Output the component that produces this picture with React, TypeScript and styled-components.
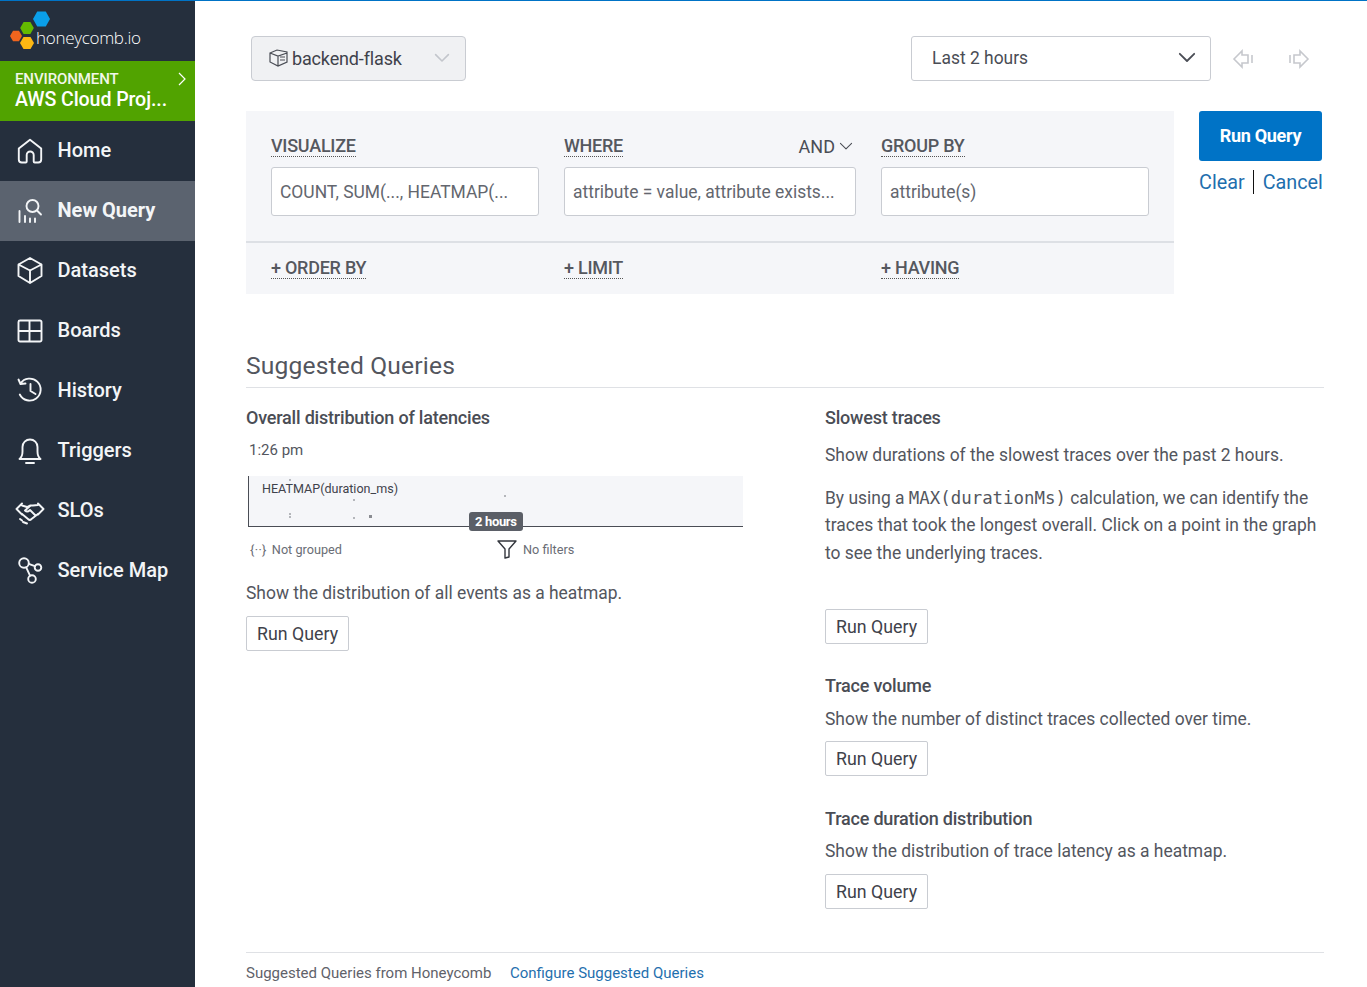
import React from 'react'
import styled, { createGlobalStyle } from 'styled-components'

const Global = createGlobalStyle`
  html, body { margin: 0; padding: 0; background: #fff; }
  body { font-family: Roboto, "Liberation Sans", sans-serif; color: #3a3d45; }
  * { box-sizing: border-box; }
`

const Page = styled.div`
  display: flex;
  width: 1367px;
  height: 987px;
  overflow: hidden;
  border-top: 1px solid #0073c6;
`
const Sidebar = styled.nav`
  width: 195px;
  flex: none;
  background: #252f3d;
  display: flex;
  flex-direction: column;
`
const LogoRow = styled.div`
  height: 60px;
  padding: 9px 0 0 9px;
  display: flex;
`
const LogoText = styled.span`
  font-family: "Open Sans", sans-serif;
  font-size: 17px;
  font-weight: 300;
  letter-spacing: -0.3px;
  color: #fff;
  margin: 17px 0 0 -17px;
  line-height: 22px;
`
const EnvBlock = styled.div`
  height: 60px;
  background: #51a300;
  color: #fff;
  padding: 9px 8px 0 15px;
  position: relative;
`
const EnvLabel = styled.div`
  font-size: 15px;
  line-height: 18px;
  font-weight: 500;
  letter-spacing: -0.1px;
  color: #f2f7e9;
`
const EnvName = styled.div`
  font-size: 19.6px;
  line-height: 24px;
  font-weight: 500;
  letter-spacing: -0.1px;
`
const EnvArrow = styled.svg`
  position: absolute;
  right: 8px;
  top: 11px;
`
const NavItem = styled.div<{ $active?: boolean }>`
  height: 60px;
  display: flex;
  align-items: center;
  padding: 0 0 2px 15px;
  background: ${p => (p.$active ? '#5b636f' : 'transparent')};
  color: #f3f5f7;
  font-size: 20px;
  font-weight: ${p => (p.$active ? 700 : 500)};
`
const NavIcon = styled.svg`
  width: 30px;
  height: 30px;
  flex: none;
  margin-right: 12.5px;
  fill: none;
  stroke: #f3f5f7;
  stroke-width: 1.9;
  stroke-linecap: round;
  stroke-linejoin: round;
`
const Main = styled.main`
  flex: 1;
  min-width: 0;
  padding: 35px 43px 0 56px;
`
const TopBar = styled.div`
  display: flex;
  align-items: center;
  height: 45px;
  margin-bottom: 30px;
`
const DatasetSelect = styled.div`
  width: 215px;
  height: 45px;
  background: #f0f1f3;
  border: 1px solid #c9ccd2;
  border-radius: 4px;
  display: flex;
  align-items: center;
  padding: 0 15px 1px 16px;
  font-size: 18px;
  color: #3f424b;
  letter-spacing: -0.15px;
`
const TimeSelect = styled.div`
  width: 300px;
  height: 45px;
  margin-left: auto;
  border: 1px solid #c9ccd2;
  border-radius: 3px;
  display: flex;
  align-items: center;
  padding: 0 14px 2px 20px;
  font-size: 17.45px;
  color: #4a4d55;
  justify-content: space-between;
`
const HistoryButtons = styled.div`
  display: flex;
  align-items: center;
  gap: 34px;
  margin: 0 14px 0 21px;
`
const QueryRow = styled.div`
  display: flex;
  margin-left: -5px;
  justify-content: space-between;
`
const Builder = styled.div`
  width: 928px;
  height: 183px;
  background: #f5f6f9;
`
const BuilderTop = styled.div`
  height: 132px;
  padding: 22px 25px 0;
  display: grid;
  grid-template-columns: 268px 292px 268px;
  column-gap: 25px;
  border-bottom: 2px solid #dde0e5;
`
const BuilderBottom = styled.div`
  padding: 15px 25px 0;
  display: grid;
  grid-template-columns: 268px 292px 268px;
  column-gap: 25px;
`
const ClauseHead = styled.div`
  display: flex;
  justify-content: space-between;
  align-items: center;
  height: 26px;
  margin-bottom: 8px;
`
const Clause = styled.span`
  font-size: 18px;
  line-height: 20px;
  color: #55585f;
  font-weight: 500;
  letter-spacing: -0.25px;
  border-bottom: 1px dotted #555;
  justify-self: start;
`
const AndLabel = styled.span`
  font-size: 18px;
  color: #4a4d55;
  display: flex;
  align-items: center;
  gap: 4px;
  margin-right: 3px;
`
const ClauseInput = styled.div`
  height: 49px;
  background: #fff;
  border: 1px solid #c9ccd2;
  border-radius: 3px;
  padding: 0 8px;
  display: flex;
  align-items: center;
  font-size: 17.45px;
  color: #63666e;
  white-space: nowrap;
  overflow: hidden;
`
const RunColumn = styled.div`
  width: 124px;
  margin-right: 1px;
`
const RunButton = styled.div`
  width: 123px;
  height: 50px;
  padding-bottom: 2px;
  background: #0073c6;
  border-radius: 3px;
  color: #fff;
  font-size: 18px;
  font-weight: 700;
  letter-spacing: -0.3px;
  display: flex;
  align-items: center;
  justify-content: center;
`
const RunLinks = styled.div`
  display: flex;
  align-items: center;
  margin-top: 9px;
  font-size: 19.8px;
  color: #1f6fae;
  height: 24px;
  white-space: nowrap;
`
const LinkDivider = styled.span`
  flex: none;
  width: 1px;
  height: 24px;
  background: #111;
  margin: 0 8.5px;
`
const SuggestHeading = styled.h2`
  margin: 54px 0 0 -5px;
  font-size: 24.6px;
  line-height: 36px;
  font-weight: 400;
  color: #53565e;
  letter-spacing: 0.17px;
  padding-bottom: 3px;
  border-bottom: 1px solid #dfe1e5;
`
const Columns = styled.div`
  display: grid;
  grid-template-columns: 579px 1fr;
  margin-left: -5px;
  height: 564px;
`
const Column = styled.div`
  display: flex;
  flex-direction: column;
  align-items: flex-start;
`
const Title = styled.div<{ $gap?: number }>`
  font-size: 18px;
  line-height: 22px;
  font-weight: 500;
  color: #4a4d55;
  letter-spacing: -0.2px;
  margin-top: ${p => p.$gap ?? 0}px;
`
const Copy = styled.p<{ $top?: number }>`
  margin: ${p => p.$top ?? 0}px 0 0;
  font-size: 17.47px;
  line-height: 27.5px;
  color: #53565e;
`
const Code = styled.code`
  font-family: "DejaVu Sans Mono", monospace;
  font-size: 17.4px;
  color: #53565e;
`
const SmallButton = styled.div<{ $top?: number }>`
  height: 35px;
  padding: 0 10px;
  border: 1px solid #c9ccd2;
  border-radius: 2px;
  margin-top: ${p => p.$top ?? 0}px;
  display: flex;
  align-items: center;
  font-size: 17.8px;
  color: #3f424b;
  background: #fff;
`
const Preview = styled.div`
  width: 495px;
  margin: 11px 0 0 2px;
`
const PreviewTime = styled.div`
  font-size: 15px;
  line-height: 20px;
  color: #53565e;
  margin-left: 1px;
  margin-bottom: 16px;
`
const Chart = styled.div`
  height: 51px;
  background: #f5f6f9;
  border-left: 1px solid #4a4d55;
  border-bottom: 1px solid #4a4d55;
  padding: 5px 0 0 13px;
  font-size: 12.55px;
  line-height: 16px;
  color: #3f424b;
  position: relative;
`
const Dot = styled.i<{ $x: number; $y: number; $dark?: boolean }>`
  position: absolute;
  left: ${p => p.$x}px;
  top: ${p => p.$y}px;
  width: ${p => (p.$dark ? 3 : 2)}px;
  height: ${p => (p.$dark ? 3 : 2)}px;
  background: ${p => (p.$dark ? '#8a8c92' : '#b4b6bb')};
`
const RangeBadge = styled.span`
  position: absolute;
  left: 220px;
  top: 36px;
  height: 19px;
  padding: 0 6px;
  border-radius: 3px;
  background: #5b5f67;
  color: #fff;
  font-size: 13px;
  font-weight: 700;
  line-height: 19px;
  letter-spacing: -0.35px;
`
const PreviewMeta = styled.div`
  display: grid;
  grid-template-columns: 247px 1fr;
  font-size: 12.7px;
  color: #6a6d75;
  height: 22px;
  margin: 11px 0 0 2px;
`
const MetaItem = styled.span`
  display: flex;
  align-items: center;
  gap: 6px;
`
const Braces = styled.span`
  letter-spacing: 0.4px;
  margin-right: -1px;
`
const Footer = styled.div`
  margin-left: -5px;
  border-top: 1px solid #dfe1e5;
  padding-top: 10px;
  display: flex;
  gap: 18.5px;
  font-size: 15px;
  line-height: 20px;
  color: #5f626a;
`
const FooterLink = styled.span`
  color: #1f6fae;
`
const CaretSlot = styled.span`
  margin-left: auto;
  display: flex;
`
const DatasetIcon = styled.svg`
  flex: none;
  margin-right: 3px;
`

const icons: Record<string, React.ReactNode> = {
  home: <path d="M3.800 13.500 15 4.800l11.200 8.700v11a3 3 0 0 1-3 3h-3.500a1 1 0 0 1-1-1v-6.500a3.500 3.500 0 0 0-7 0v6.500a1 1 0 0 1-1 1H6.800a3 3 0 0 1-3-3z" />,
  query: (
    <>
      <circle cx="17.500" cy="11" r="6" />
      <path d="m22 15.500 4 4M4.500 16v11M10 21v6M15 23.500V27M20 23.500V27" />
    </>
  ),
  datasets: <path d="M15 3 26.500 9.500v11.500L15 28 3.500 21V9.500zM3.500 9.500 15 15.500l11.500-6M15 15.500V28" />,
  boards: <path d="M3.500 7a1.500 1.500 0 0 1 1.500-1.500h20a1.500 1.500 0 0 1 1.500 1.500v18a1.500 1.500 0 0 1-1.500 1.500H5A1.500 1.500 0 0 1 3.500 25zM3.500 16h23M14.500 5.500V26.500" />,
  history: <path d="M5.500 8.500A11 11 0 1 1 4.800 19.500M3.500 4.500l2 4.500 5-.5M15.500 9v7l5 3" />,
  triggers: <path d="M4.500 24h21c-2-1.500-3-4-3-7.500V12a7.500 7.500 0 0 0-15 0v4.500c0 3.500-1 6-3 7.500zM11 28h8" />,
  slos: (
    <g transform="translate(0 2)">
      <path d="M7 6.500 1.500 12 7 17.500M23 6.500 28.500 12 23 17.500M7 8.500l5 1.500 3-1.500h3l5-.5" />
      <path d="M15 9l-5 4.500c1.500 1.500 3.500 1 5-.5l5.500 5.500M7 17l6 5c1 1 2.500 1 3.500 0l6.500-5M8 25l4 1.500M5 22l2 1.500" />
    </g>
  ),
  map: (
    <>
      <circle cx="9" cy="8" r="4.800" />
      <circle cx="23" cy="12.500" r="3.300" />
      <circle cx="17" cy="24" r="3.800" />
      <path d="m11.200 12.300 3.800 8.300M13.800 8.800l6 2.400" />
    </>
  ),
}

const navItems = [
  ['home', 'Home'],
  ['query', 'New Query'],
  ['datasets', 'Datasets'],
  ['boards', 'Boards'],
  ['history', 'History'],
  ['triggers', 'Triggers'],
  ['slos', 'SLOs'],
  ['map', 'Service Map'],
]

const dots: [number, number, boolean?][] = [
  [40, 3], [104, 23], [255, 19], [40, 37], [40, 40], [104, 41], [120, 39, true],
]

const Chevron = ({ color, w = 18, sw = 2 }: { color: string; w?: number; sw?: number }) => (
  <svg width={w} height={w * 0.6} viewBox="0 0 20 12" fill="none" stroke={color} strokeWidth={sw}>
    <path d="M2 2l8 8 8-8" strokeLinecap="round" strokeLinejoin="round" />
  </svg>
)

const hex = (cx: number, cy: number, r: number) => {
  const h = r * 0.87
  return `${cx - r},${cy} ${cx - r / 2},${cy - h} ${cx + r / 2},${cy - h} ${cx + r},${cy} ${cx + r / 2},${cy + h} ${cx - r / 2},${cy + h}`
}

const Logo = () => (
  <svg width="44" height="44" viewBox="0 0 44 44">
    <polygon points={hex(32.5, 9, 8.5)} fill="#0a9fea" />
    <polygon points={hex(18, 18, 6.8)} fill="#64ba00" />
    <polygon points={hex(7, 26, 6)} fill="#f0651e" />
    <polygon points={hex(18, 33, 7)} fill="#fdb813" />
  </svg>
)

export default function App() {
  return (
    <>
      <Global />
      <Page>
        <Sidebar>
          <LogoRow>
            <Logo />
            <LogoText>honeycomb.io</LogoText>
          </LogoRow>
          <EnvBlock>
            <EnvLabel>ENVIRONMENT</EnvLabel>
            <EnvName>AWS Cloud Proj...</EnvName>
            <EnvArrow width="10" height="14" viewBox="0 0 10 14" fill="none" stroke="#fff" strokeWidth="1.2">
              <path d="m2 1 6 6-6 6" />
            </EnvArrow>
          </EnvBlock>
          {navItems.map(([icon, label]) => (
            <NavItem key={label} $active={icon === 'query'}>
              <NavIcon viewBox="0 0 30 30">{icons[icon]}</NavIcon>
              {label}
            </NavItem>
          ))}
        </Sidebar>
        <Main>
          <TopBar>
            <DatasetSelect>
              <DatasetIcon width="21" height="20" viewBox="0 0 21 20" fill="none" stroke="#4a4d55" strokeWidth="1.2">
                <path d="M2 5l7-3 10 2v10l-9 4-8-4zM2 5l8 3 9-3M10 8v10M12 9h5M12 12h5" />
              </DatasetIcon>
              backend-flask
              <CaretSlot>
                <Chevron color="#c3c6cc" w={16} />
              </CaretSlot>
            </DatasetSelect>
            <TimeSelect>
              Last 2 hours
              <Chevron color="#4a4d55" />
            </TimeSelect>
            <HistoryButtons>
              <svg width="22" height="20" viewBox="0 0 22 20" fill="none" stroke="#c6c8cd" strokeWidth="1.6">
                <path d="M2 10l8-8v4h6v8h-6v4zM20 6v8" />
              </svg>
              <svg width="22" height="20" viewBox="0 0 22 20" fill="none" stroke="#c6c8cd" strokeWidth="1.6">
                <path d="M20 10l-8-8v4H6v8h6v4zM2 6v8" />
              </svg>
            </HistoryButtons>
          </TopBar>
          <QueryRow>
            <Builder>
              <BuilderTop>
                <div>
                  <ClauseHead><Clause>VISUALIZE</Clause></ClauseHead>
                  <ClauseInput>COUNT, SUM(..., HEATMAP(...</ClauseInput>
                </div>
                <div>
                  <ClauseHead>
                    <Clause>WHERE</Clause>
                    <AndLabel>AND <Chevron color="#4a4d55" w={14} sw={1.5} /></AndLabel>
                  </ClauseHead>
                  <ClauseInput>attribute = value, attribute exists...</ClauseInput>
                </div>
                <div>
                  <ClauseHead><Clause>GROUP BY</Clause></ClauseHead>
                  <ClauseInput>attribute(s)</ClauseInput>
                </div>
              </BuilderTop>
              <BuilderBottom>
                <Clause>+ ORDER BY</Clause>
                <Clause>+ LIMIT</Clause>
                <Clause>+ HAVING</Clause>
              </BuilderBottom>
            </Builder>
            <RunColumn>
              <RunButton>Run Query</RunButton>
              <RunLinks>Clear<LinkDivider />Cancel</RunLinks>
            </RunColumn>
          </QueryRow>
          <SuggestHeading>Suggested Queries</SuggestHeading>
          <Columns>
            <Column>
              <Title $gap={19}>Overall distribution of latencies</Title>
              <Preview>
                <PreviewTime>1:26 pm</PreviewTime>
                <Chart>
                  HEATMAP(duration_ms)
                  {dots.map(([x, y, dark]) => <Dot key={`${x}-${y}`} $x={x} $y={y} $dark={dark} />)}
                  <RangeBadge>2 hours</RangeBadge>
                </Chart>
                <PreviewMeta>
                  <MetaItem><Braces>{'{··}'}</Braces>Not grouped</MetaItem>
                  <MetaItem>
                    <svg width="20" height="20" viewBox="0 0 20 20" fill="none" stroke="#33363d" strokeWidth="1.4">
                      <path d="M1 2h18l-7 8v8l-4 1v-9z" strokeLinejoin="round" />
                    </svg>
                    No filters
                  </MetaItem>
                </PreviewMeta>
              </Preview>
              <Copy $top={20}>Show the distribution of all events as a heatmap.</Copy>
              <SmallButton $top={8}>Run Query</SmallButton>
            </Column>
            <Column>
              <Title $gap={19}>Slowest traces</Title>
              <Copy $top={13}>Show durations of the slowest traces over the past 2 hours.</Copy>
              <Copy $top={15}>
                By using a <Code>MAX(durationMs)</Code> calculation, we can identify the traces that took the longest overall. Click on a point in the graph to see the underlying traces.
              </Copy>
              <SmallButton $top={42}>Run Query</SmallButton>
              <Title $gap={31}>Trace volume</Title>
              <Copy $top={9}>Show the number of distinct traces collected over time.</Copy>
              <SmallButton $top={7}>Run Query</SmallButton>
              <Title $gap={32}>Trace duration distribution</Title>
              <Copy $top={8}>Show the distribution of trace latency as a heatmap.</Copy>
              <SmallButton $top={9}>Run Query</SmallButton>
            </Column>
          </Columns>
          <Footer>
            Suggested Queries from Honeycomb
            <FooterLink>Configure Suggested Queries</FooterLink>
          </Footer>
        </Main>
      </Page>
    </>
  )
}
